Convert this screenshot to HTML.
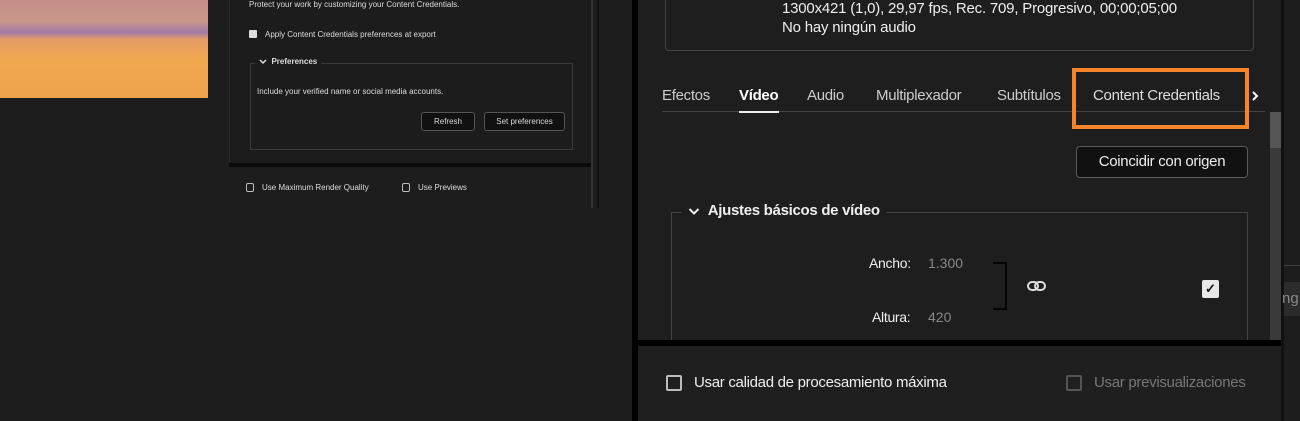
<!DOCTYPE html>
<html><head><meta charset="utf-8"><style>
*{margin:0;padding:0;box-sizing:border-box}
body{width:1300px;height:421px;background:#1d1d1d;position:relative;overflow:hidden;font-family:"Liberation Sans",sans-serif;color:#d8d8d8}
.a{position:absolute}
.t{position:absolute;white-space:nowrap}
.cb{position:absolute;border:1.5px solid #bbb;border-radius:2px}
</style></head><body>
<div class="a" style="left:0;top:0;width:208px;height:98px;background:linear-gradient(180deg,#c49088 0%,#c8968a 22%,#a07aa8 33%,#e39a66 40%,#f0a850 60%,#eea34c 100%)"></div>
<div class="a" style="left:229px;top:0;width:363px;height:163px;background:#1c1c1c;border-left:1px solid #2a2a2a"></div>
<div class="t" style="left:249px;top:0px;font-size:8px;color:#ddd">Protect your work by customizing your Content Credentials.</div>
<div class="a" style="left:249px;top:30px;width:8px;height:8px;background:#ddd;border-radius:1px"></div>
<div class="t" style="left:265px;top:30px;font-size:8px;color:#ddd">Apply Content Credentials preferences at export</div>
<div class="a" style="left:250px;top:63px;width:323px;height:87px;border:1px solid #3a3a3a"></div>
<div class="t" style="left:255px;top:57px;font-size:8px;font-weight:bold;color:#ddd;background:#1c1c1c;padding:0 4px"><svg width="8" height="6" style="vertical-align:middle"><path d="M1 1L4 4L7 1" stroke="#ddd" stroke-width="1.5" fill="none"/></svg>&nbsp;&nbsp;Preferences</div>
<div class="t" style="left:257px;top:87px;font-size:8px;color:#ddd">Include your verified name or social media accounts.</div>
<div class="a" style="left:421px;top:112px;width:54px;height:19px;border:1px solid #555;border-radius:3px;background:#111;font-size:8px;text-align:center;line-height:17px">Refresh</div>
<div class="a" style="left:484px;top:112px;width:81px;height:19px;border:1px solid #555;border-radius:3px;background:#111;font-size:8px;text-align:center;line-height:17px">Set preferences</div>
<div class="a" style="left:229px;top:163px;width:363px;height:4px;background:#0a0a0a"></div>
<div class="cb" style="left:246px;top:183px;width:8px;height:9px"></div>
<div class="t" style="left:262px;top:183px;font-size:8px;color:#ddd">Use Maximum Render Quality</div>
<div class="cb" style="left:402px;top:183px;width:8px;height:9px"></div>
<div class="t" style="left:418px;top:183px;font-size:8px;color:#ddd">Use Previews</div>
<div class="a" style="left:591px;top:0;width:2px;height:208px;background:#333"></div>
<div class="a" style="left:597px;top:0;width:2px;height:208px;background:#111"></div>
<div class="a" style="left:632px;top:0;width:6px;height:421px;background:#000"></div>
<div class="a" style="left:638px;top:0;width:645px;height:421px;background:#1e1e1e"></div>
<div class="a" style="left:665px;top:-10px;width:589px;height:61px;border:1px solid #444;border-radius:4px"></div>
<div class="t" style="left:782px;top:0px;font-size:15px;color:#eee;letter-spacing:-0.2px">1300x421 (1,0), 29,97 fps, Rec. 709, Progresivo, 00;00;05;00</div>
<div class="t" style="left:782px;top:19px;font-size:15px;color:#eee;letter-spacing:-0.2px">No hay ningún audio</div>
<div class="t" style="left:662px;top:87px;font-size:15px;color:#ccc;letter-spacing:-0.3px">Efectos</div>
<div class="t" style="left:739px;top:87px;font-size:15px;color:#fff;font-weight:bold;letter-spacing:-0.3px">Vídeo</div>
<div class="t" style="left:807px;top:87px;font-size:15px;color:#ccc;letter-spacing:-0.3px">Audio</div>
<div class="t" style="left:876px;top:87px;font-size:15px;color:#ccc;letter-spacing:-0.3px">Multiplexador</div>
<div class="t" style="left:997px;top:87px;font-size:15px;color:#ccc;letter-spacing:-0.3px">Subtítulos</div>
<div class="t" style="left:1093px;top:87px;font-size:15px;color:#ddd;letter-spacing:-0.3px">Content Credentials</div>
<svg class="a" style="left:1251px;top:90px" width="8" height="12"><path d="M2 2L6 6L2 10" stroke="#fff" stroke-width="2" fill="none"/></svg>
<div class="a" style="left:662px;top:111px;width:603px;height:1px;background:#444"></div>
<div class="a" style="left:739px;top:111px;width:40px;height:2px;background:#eee"></div>
<div class="a" style="left:1072px;top:68px;width:177px;height:61px;border:4px solid #f5842a"></div>
<div class="a" style="left:1270px;top:112px;width:11px;height:228px;background:#3a3a3a"></div>
<div class="a" style="left:1270px;top:112px;width:11px;height:36px;background:#555"></div>
<div class="a" style="left:1076px;top:146px;width:172px;height:32px;border:1px solid #5a5a5a;border-radius:4px;background:#111;font-size:15px;color:#eee;text-align:center;line-height:30px;letter-spacing:-0.3px">Coincidir con origen</div>
<div class="a" style="left:671px;top:212px;width:577px;height:140px;border:1px solid #444"></div>
<div class="t" style="left:682px;top:202px;font-size:15px;color:#eee;font-weight:bold;background:#1e1e1e;padding:0 6px;letter-spacing:-0.3px"><svg width="12" height="9" style="vertical-align:middle"><path d="M1.5 2L6 6.5L10.5 2" stroke="#eee" stroke-width="2" fill="none"/></svg>&nbsp;&nbsp;Ajustes básicos de vídeo</div>
<div class="t" style="left:869px;top:255px;font-size:14px;color:#eee;letter-spacing:-0.3px">Ancho:</div>
<div class="t" style="left:928px;top:255px;font-size:14px;color:#888">1.300</div>
<div class="t" style="left:872px;top:309px;font-size:14px;color:#eee;letter-spacing:-0.3px">Altura:</div>
<div class="t" style="left:928px;top:309px;font-size:14px;color:#888">420</div>
<div class="a" style="left:993px;top:262px;width:14px;height:48px;border:2px solid #050505;border-left:none"></div>
<svg class="a" style="left:1027px;top:280px" width="20" height="12"><rect x="1" y="2" width="10" height="8" rx="4" stroke="#ddd" stroke-width="2" fill="none"/><rect x="8" y="2" width="10" height="8" rx="4" stroke="#ddd" stroke-width="2" fill="none"/></svg>
<div class="a" style="left:1202px;top:280px;width:17px;height:18px;background:#e8e8e8;border-radius:2px;color:#111;font-size:13px;font-weight:bold;text-align:center;line-height:18px">✓</div>
<div class="a" style="left:637px;top:340px;width:646px;height:6px;background:#000"></div>
<div class="a" style="left:638px;top:346px;width:645px;height:75px;background:#1f1f1f"></div>
<div class="cb" style="left:666px;top:375px;width:16px;height:16px;border:2px solid #bbb"></div>
<div class="t" style="left:694px;top:374px;font-size:15px;color:#eee;letter-spacing:-0.3px">Usar calidad de procesamiento máxima</div>
<div class="cb" style="left:1066px;top:375px;width:16px;height:16px;border:2px solid #555"></div>
<div class="t" style="left:1094px;top:374px;font-size:15px;color:#777;letter-spacing:-0.3px">Usar previsualizaciones</div>
<div class="a" style="left:1281px;top:0;width:3px;height:421px;background:#111"></div>
<div class="a" style="left:1284px;top:265px;width:16px;height:1px;background:#3a3a3a"></div>
<div class="a" style="left:1284px;top:282px;width:16px;height:34px;background:#2c2c2c"></div>
<div class="t" style="left:1282px;top:290px;font-size:15px;color:#888">ng</div>
</body></html>
